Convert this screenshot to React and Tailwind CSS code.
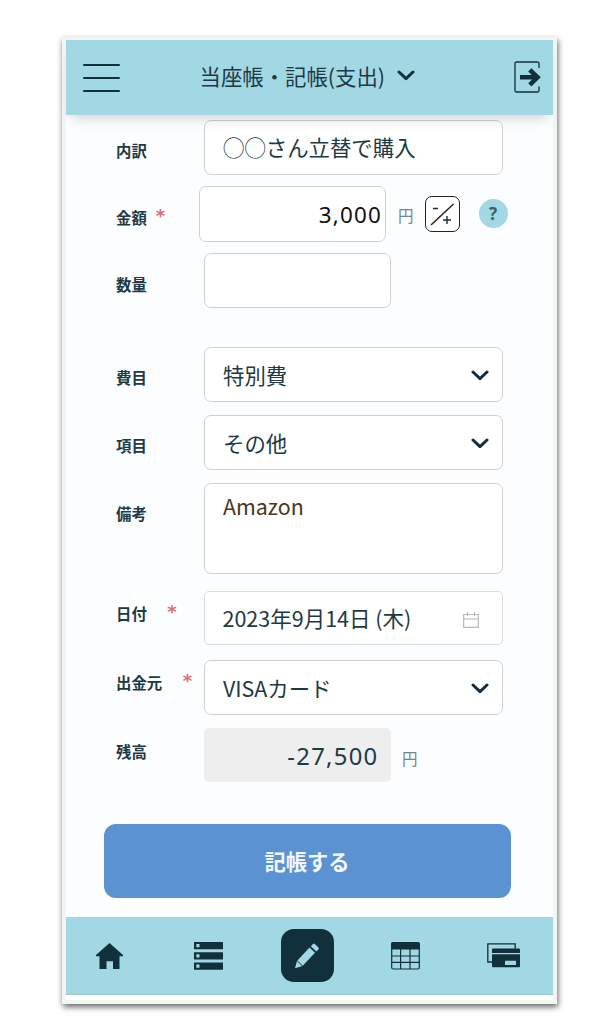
import { useState } from "react";

const Chevron = ({ className }) => (
  <svg viewBox="0 0 18 11" className={className} fill="none" stroke="#12303b" strokeWidth="3" strokeLinecap="round" strokeLinejoin="round">
    <path d="M2 2l7 6.7L16 2" />
  </svg>
);

function Row({ label, required, labelClass, className, children }) {
  return (
    <div className={`flex items-start ${className}`}>
      <div className={`w-[88px] shrink-0 flex text-[15.4px] leading-6 font-bold whitespace-nowrap ${labelClass}`}>
        {label}
        {required && <span className={`-mt-px text-[#db6f6e] font-bold text-[18px] leading-6 font-['DejaVu_Sans'] ${required}`}>*</span>}
      </div>
      {children}
    </div>
  );
}

function Select({ value }) {
  return (
    <button className="w-[299px] h-[55px] rounded-[7px] border border-[#cfd1d2] bg-white flex items-center justify-between pl-[18px] pr-[13px] pt-px text-[21.4px]">
      {value}
      <Chevron className="w-[18px] h-[11px]" />
    </button>
  );
}

function App() {
  const [detail, setDetail] = useState("◯◯さん立替で購入");
  const [amount, setAmount] = useState("3,000");
  const [quantity, setQuantity] = useState("");
  const [memo, setMemo] = useState("Amazon");

  return (
    <div className="h-[1034px] bg-white pt-[37px] pl-[62px] overflow-hidden font-['Noto_Sans_CJK_JP',sans-serif] text-[#1d3a44]">
      <div className="w-[495px] h-[967px] bg-[#f1f5f4] pt-[3px] pl-[3.5px] pr-[4.5px] shadow-[1px_3px_6px_0px_rgba(0,0,0,0.6)]">

        {/* Header */}
        <header className="relative h-[75px] bg-[#a2d7e4] flex items-center shadow-[0_9px_12px_-6px_rgba(0,0,0,0.18)]">
          <button className="ml-[17px] w-[37px] h-[28px] flex flex-col justify-between">
            <span className="h-[2px] w-full bg-[#12303b] rounded" />
            <span className="h-[2px] w-full bg-[#12303b] rounded" />
            <span className="h-[2px] w-full bg-[#12303b] rounded" />
          </button>
          <h1 className="ml-[80px] text-[21.4px] leading-8 whitespace-nowrap pb-[4px]">当座帳・記帳(支出)</h1>
          <Chevron className="ml-[12px] mb-[4px] w-[18px] h-[11px]" />
          <svg viewBox="0 0 28 32" className="ml-auto mr-[11px] mb-[2px] w-[28px] h-[32px]" fill="none" stroke="#12303b">
            <path d="M25 7V2.5a1.5 1.5 0 0 0-1.5-1.5H2.5A1.5 1.5 0 0 0 1 2.5v27A1.5 1.5 0 0 0 2.5 31h21a1.5 1.5 0 0 0 1.5-1.5V25.5" strokeWidth="1.3" />
            <path d="M6 16.3h17M15.8 8.8l7.7 7.5-7.7 7.5" strokeWidth="4.6" />
          </svg>
        </header>

        {/* Form */}
        <main className="h-[802px] bg-[#fcfdff] pl-[50.5px] pt-[5px]">
          <Row label="内訳" labelClass="pt-[18px]" className="h-[66px]">
            <input
              className="w-[299px] h-[55px] rounded-[7px] border border-[#cfd1d2] bg-white px-[18px] pb-[2px] text-[21.4px]"
              value={detail}
              onChange={(e) => setDetail(e.target.value)}
            />
          </Row>

          <Row label="金額" required="ml-[9px]" labelClass="pt-[19px]" className="h-[67px]">
            <input
              className="-ml-[5px] w-[187px] h-[56px] rounded-[7px] border border-[#cfd1d2] bg-white pl-[4px] pr-[3px] text-right text-[22.4px] tracking-[1.2px] text-[#111] font-['Noto_Sans']"
              value={amount}
              onChange={(e) => setAmount(e.target.value)}
            />
            <span className="ml-[12px] mt-[17px] text-[15.5px] leading-6 text-[#71858b]">円</span>
            <button className="ml-[11px] mt-[10px] w-[35px] h-[36px] rounded-[7px] border-[1.5px] border-[#222] bg-white">
              <svg viewBox="0 0 33 34" className="w-full h-full" fill="none" stroke="#12303b">
                <path d="M5 28L27.5 7" stroke="#222" strokeWidth="1.5" />
                <path d="M7 11.5h5M17 23h8M21 19v8" strokeWidth="1.4" />
              </svg>
            </button>
            <button className="ml-[19px] mt-[13px] w-[29px] h-[29px] rounded-full bg-[#a2d7e4] text-[17px] leading-[29px] font-bold text-[#3f5f69] font-['Noto_Sans']">?</button>
          </Row>

          <Row label="数量" labelClass="pt-[19px]" className="h-[94px]">
            <input
              className="w-[187px] h-[55px] rounded-[7px] border border-[#cfd1d2] bg-white px-[18px] text-right text-[21.6px]"
              value={quantity}
              onChange={(e) => setQuantity(e.target.value)}
            />
          </Row>

          <Row label="費目" labelClass="pt-[18px]" className="h-[68px]">
            <Select value="特別費" />
          </Row>

          <Row label="項目" labelClass="pt-[18px]" className="h-[68px]">
            <Select value="その他" />
          </Row>

          <Row label="備考" labelClass="pt-[18px]" className="h-[108px]">
            <textarea
              className="w-[299px] h-[91px] resize-none rounded-[7px] border border-[#cfd1d2] bg-white px-[18px] pt-[6px] text-[21.4px] leading-8 text-[#4a3520]"
              value={memo}
              onChange={(e) => setMemo(e.target.value)}
            />
          </Row>

          <Row label="日付" required="ml-[20.5px]" labelClass="pt-[10px]" className="h-[69px]">
            <div className="w-[299px] h-[54px] rounded-[5px] border border-[#d9dbdc] bg-white flex items-center justify-between pl-[17.5px] pr-[23px] text-[21.5px]">
              <span className="pt-px">2023年9月14日 (木)</span>
              <svg viewBox="0 0 16 16" className="mt-[4px] w-[16px] h-[16px]" fill="none" stroke="#b8b8b8" strokeWidth="1.2">
                <path d="M.7 2.5h14.6v12.8H.7zM.7 7h14.6M4.5 0v4M11.5 0v4" />
              </svg>
            </div>
          </Row>

          <Row label="出金元" required="ml-[20.5px]" labelClass="pt-[10px]" className="h-[68px]">
            <Select value="VISAカード" />
          </Row>

          <Row label="残高" labelClass="pt-[11px]" className="h-[96px]">
            <div className="w-[187px] h-[54px] rounded-[5px] bg-[#eee] flex items-center justify-end pr-[12.5px] pt-[3px] text-[23.8px] tracking-[1.3px] font-['Noto_Sans']">-27,500</div>
            <span className="ml-[11px] mt-[18px] text-[15.5px] leading-6 text-[#71858b]">円</span>
          </Row>

          <button className="-ml-[12.5px] w-[407px] h-[74px] rounded-[12px] bg-[#5b92d2] text-[21.3px] font-bold text-[#f4f7fb]">記帳する</button>
        </main>

        {/* Bottom navigation */}
        <nav className="h-[78px] bg-[#a2d7e4] border-b border-[#98c5d0] flex items-center text-[#12303b]">
          <svg viewBox="0 0 27 26" className="ml-[30.5px] w-[27px] h-[26px]" fill="currentColor">
            <path d="M13.5 0L27 12v1.2h-3.5V26h-6.5v-7.8h-6.5V26H3.5V13.2H0V12z" />
          </svg>
          <svg viewBox="0 0 29 28" className="ml-[71px] w-[29px] h-[28px]" fill="currentColor">
            <path fillRule="evenodd" d="M0 0h29v7.3H0zM2.3 2.1v3.2h3.2V2.1zM0 10.2h29v7.3H0zM2.3 12.3v3.2h3.2v-3.2zM0 20.5h29v7.3H0zM2.3 22.6v3.2h3.2v-3.2z" />
          </svg>
          <div className="ml-[57.5px] w-[53px] h-[53px] rounded-[13px] bg-[#12303b] flex items-center justify-center text-[#a2d7e4]">
            <svg viewBox="0 0 26 26" className="w-[26px] h-[26px]" fill="currentColor">
              <path d="M1 25.3L3 18 15.5 4.500 21 9.800 8.500 23zM16.800 3.200L19 .9q.9-.8 1.800 0l3.700 3.600q.8.900 0 1.800L22.300 8.500z" />
              <path d="M3 17.5l5.8 5.8" stroke="#12303b" strokeWidth="1" />
            </svg>
          </div>
          <svg viewBox="0 0 29 28" className="ml-[57.5px] w-[29px] h-[28px]" fill="none" stroke="currentColor">
            <rect x=".7" y=".7" width="27.6" height="26.3" rx="1.5" strokeWidth="1.2" />
            <path d="M.7 1h27.6v6H.7z" fill="currentColor" />
            <path d="M.7 14h27.6M.7 20.3h27.6M9.6 7v20M19 7v20" strokeWidth="1.2" />
          </svg>
          <svg viewBox="0 0 33 25" className="ml-[67px] w-[33px] h-[25px]" fill="none" stroke="currentColor">
            <path d="M5 19H.8V.8h27.4v5" strokeWidth="1.3" />
            <path stroke="none" fill="currentColor" fillRule="evenodd" d="M6 5.5h26q1 0 1 1v3.5H5V6.5q0-1 1-1zM5 11.2h28v12q0 1-1 1H6q-1 0-1-1zM18 17.8v4.2h11v-4.2z" />
          </svg>
        </nav>
        <div className="h-[5px] bg-white" />
      </div>
    </div>
  );
}

export default App;
